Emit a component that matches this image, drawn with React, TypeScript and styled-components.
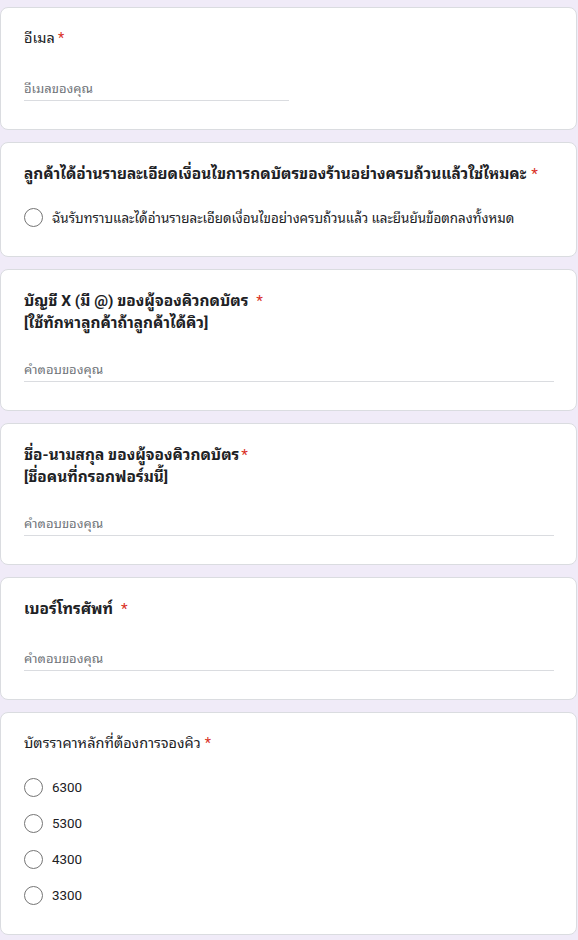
import React from "react";
import styled, { createGlobalStyle } from "styled-components";

const GlobalStyle = createGlobalStyle`
  html, body {
    margin: 0;
    padding: 0;
    background: #f0ebf8;
  }
  body {
    font-family: Roboto, "Noto Sans Thai Looped", "Noto Sans Thai", "Noto Sans", Arial, sans-serif;
    color: #202124;
  }
`;

type Question =
  | { kind: "text"; title: string[]; bold: boolean; placeholder: string; short?: boolean; starGap: number }
  | { kind: "radio"; title: string[]; bold: boolean; options: string[]; starGap: number };

const questions: Question[] = [
  { kind: "text", title: ["อีเมล"], bold: false, placeholder: "อีเมลของคุณ", short: true, starGap: 3 },
  {
    kind: "radio",
    title: ["ลูกค้าได้อ่านรายละเอียดเงื่อนไขการกดบัตรของร้านอย่างครบถ้วนแล้วใช่ไหมคะ"],
    bold: true,
    options: ["ฉันรับทราบและได้อ่านรายละเอียดเงื่อนไขอย่างครบถ้วนแล้ว และยืนยันข้อตกลงทั้งหมด"],
    starGap: 5,
  },
  {
    kind: "text",
    title: ["บัญชี X (มี @) ของผู้จองคิวกดบัตร ", "[ใช้ทักหาลูกค้าถ้าลูกค้าได้คิว]"],
    bold: true,
    placeholder: "คำตอบของคุณ",
    starGap: 4,
  },
  {
    kind: "text",
    title: ["ชื่อ-นามสกุล ของผู้จองคิวกดบัตร", "[ชื่อคนที่กรอกฟอร์มนี้]"],
    bold: true,
    placeholder: "คำตอบของคุณ",
    starGap: 2,
  },
  { kind: "text", title: ["เบอร์โทรศัพท์ "], bold: true, placeholder: "คำตอบของคุณ", starGap: 4 },
  {
    kind: "radio",
    title: ["บัตรราคาหลักที่ต้องการจองคิว"],
    bold: false,
    options: ["6300", "5300", "4300", "3300"],
    starGap: 4,
  },
];

const Page = styled.div`
  display: flex;
  flex-direction: column;
  gap: 12px;
  padding: 7px 1px 2px 0;
`;

const Card = styled.section<{ $radio: boolean }>`
  background: #fff;
  border: 1px solid #dadce0;
  border-radius: 8px;
  padding: 20px 23px ${({ $radio }) => ($radio ? "21px" : "28px")} 23px;
`;

const Title = styled.div<{ $bold: boolean }>`
  font-size: ${({ $bold }) => ($bold ? "15.4px" : "14.5px")};
  line-height: 22px;
  font-weight: ${({ $bold }) => ($bold ? 700 : 400)};
  color: #202124;
  white-space: nowrap;
`;

const Star = styled.span<{ $gap: number }>`
  color: #d93025;
  font-weight: 400;
  margin-left: ${({ $gap }) => $gap}px;
`;

const InputBox = styled.div<{ $short?: boolean; $tight?: boolean }>`
  margin-top: ${({ $tight }) => ($tight ? "26px" : "29px")};
  width: ${({ $short }) => ($short ? "265px" : "530px")};
  border-bottom: 1px solid #dadce0;
  padding-bottom: 1px;
  font-size: 13px;
  line-height: 20px;
  color: #70757a;
`;

const Options = styled.div`
  margin-top: 14px;
  display: flex;
  flex-direction: column;
`;

const Option = styled.label`
  display: flex;
  align-items: center;
  gap: 9px;
  height: 36px;
  font-size: 13.4px;
  color: #202124;
`;

const Radio = styled.span`
  box-sizing: border-box;
  width: 19px;
  height: 19px;
  border-radius: 50%;
  border: 1.6px solid #757575;
  flex-shrink: 0;
`;

export default function App() {
  return (
    <>
      <GlobalStyle />
      <Page>
        {questions.map((q, i) => (
          <Card key={i} $radio={q.kind === "radio"}>
            <Title $bold={q.bold}>
              {q.title.map((line, j) => (
                <div key={j}>
                  {line}
                  {j === 0 && <Star $gap={q.starGap}>*</Star>}
                </div>
              ))}
            </Title>
            {q.kind === "text" ? (
              <InputBox $short={q.short} $tight={q.title.length > 1}>
                {q.placeholder}
              </InputBox>
            ) : (
              <Options>
                {q.options.map((o) => (
                  <Option key={o}>
                    <Radio />
                    {o}
                  </Option>
                ))}
              </Options>
            )}
          </Card>
        ))}
      </Page>
    </>
  );
}
